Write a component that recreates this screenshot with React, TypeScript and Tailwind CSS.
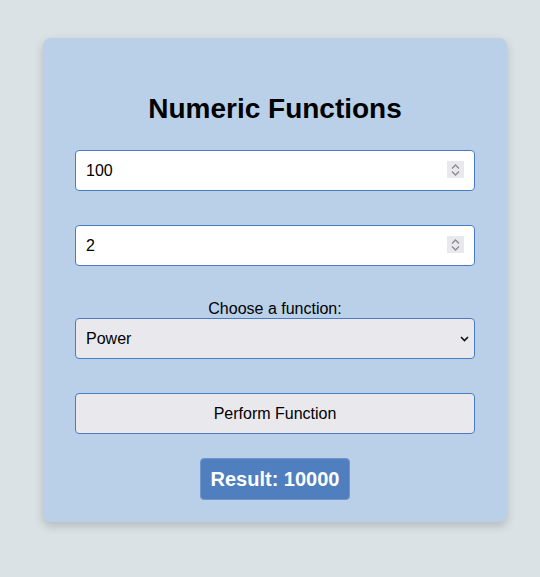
import { useState } from 'react';

function Spinner() {
  return (
    <div className="pointer-events-none absolute right-[11px] top-[11px] flex h-[17px] w-[17px] flex-col items-center justify-center gap-[2px] bg-[#e9e9ed]">
      <svg width="9" height="5" viewBox="0 0 9 5" fill="none" stroke="#8a8a95" strokeWidth="1.3">
        <path d="M1 4.5 4.5 1 8 4.5" />
      </svg>
      <svg width="9" height="5" viewBox="0 0 9 5" fill="none" stroke="#8a8a95" strokeWidth="1.3">
        <path d="M1 0.5 4.5 4 8 0.5" />
      </svg>
    </div>
  );
}

export default function App() {
  const [a, setA] = useState('100');
  const [b, setB] = useState('2');
  const [fn, setFn] = useState('power');

  const inputCls =
    'h-[41px] w-full rounded border border-[#4a7cc4] bg-white px-[10px] text-base outline-none [appearance:textfield] [&::-webkit-inner-spin-button]:appearance-none [&::-webkit-outer-spin-button]:appearance-none';

  return (
    <div className="min-h-[577px] bg-[#dae2e6] pt-[38px] pl-[43px] font-['Liberation_Sans',Arial,sans-serif] text-black">
      <div className="w-[464px] h-[484px] rounded-lg bg-[#b9d0e8] px-8 pt-8 shadow-[0_4px_10px_rgba(0,0,0,0.18)] flex flex-col">
        <h2 className="mt-[23px] mb-[25px] text-center text-[28px] font-bold leading-[32px]">Numeric Functions</h2>

        <div className="relative">
          <input type="number" value={a} onChange={(e) => setA(e.target.value)} className={inputCls} />
          <Spinner />
        </div>

        <div className="relative mt-[34px]">
          <input type="number" value={b} onChange={(e) => setB(e.target.value)} className={inputCls} />
          <Spinner />
        </div>

        <label className="mt-[33px] block text-center text-base leading-[19px]">Choose a function:</label>
        <div className="relative">
          <select
            value={fn}
            onChange={(e) => setFn(e.target.value)}
            className="h-[41px] w-full appearance-none rounded border border-[#4a7cc4] bg-[#e9e9ed] pl-[10px] text-base outline-none"
          >
            <option value="power">Power</option>
            <option value="sqrt">Square Root</option>
            <option value="log">Logarithm</option>
          </select>
          <svg
            className="pointer-events-none absolute right-[6px] top-[18px]"
            width="9"
            height="6"
            viewBox="0 0 9 6"
            fill="none"
            stroke="#111"
            strokeWidth="1.6"
          >
            <path d="M1 1 4.5 4.5 8 1" />
          </svg>
        </div>

        <button className="mt-[34px] h-[41px] w-full rounded border border-[#4a7cc4] bg-[#e9e9ed] text-base">
          Perform Function
        </button>

        <div className="mt-[24px] self-center rounded border border-[#6f95cc] bg-[#4f7fbf] px-[10px] py-[9px] text-[20px] font-bold leading-[22px] text-white">
          Result: 10000
        </div>
      </div>
    </div>
  );
}
